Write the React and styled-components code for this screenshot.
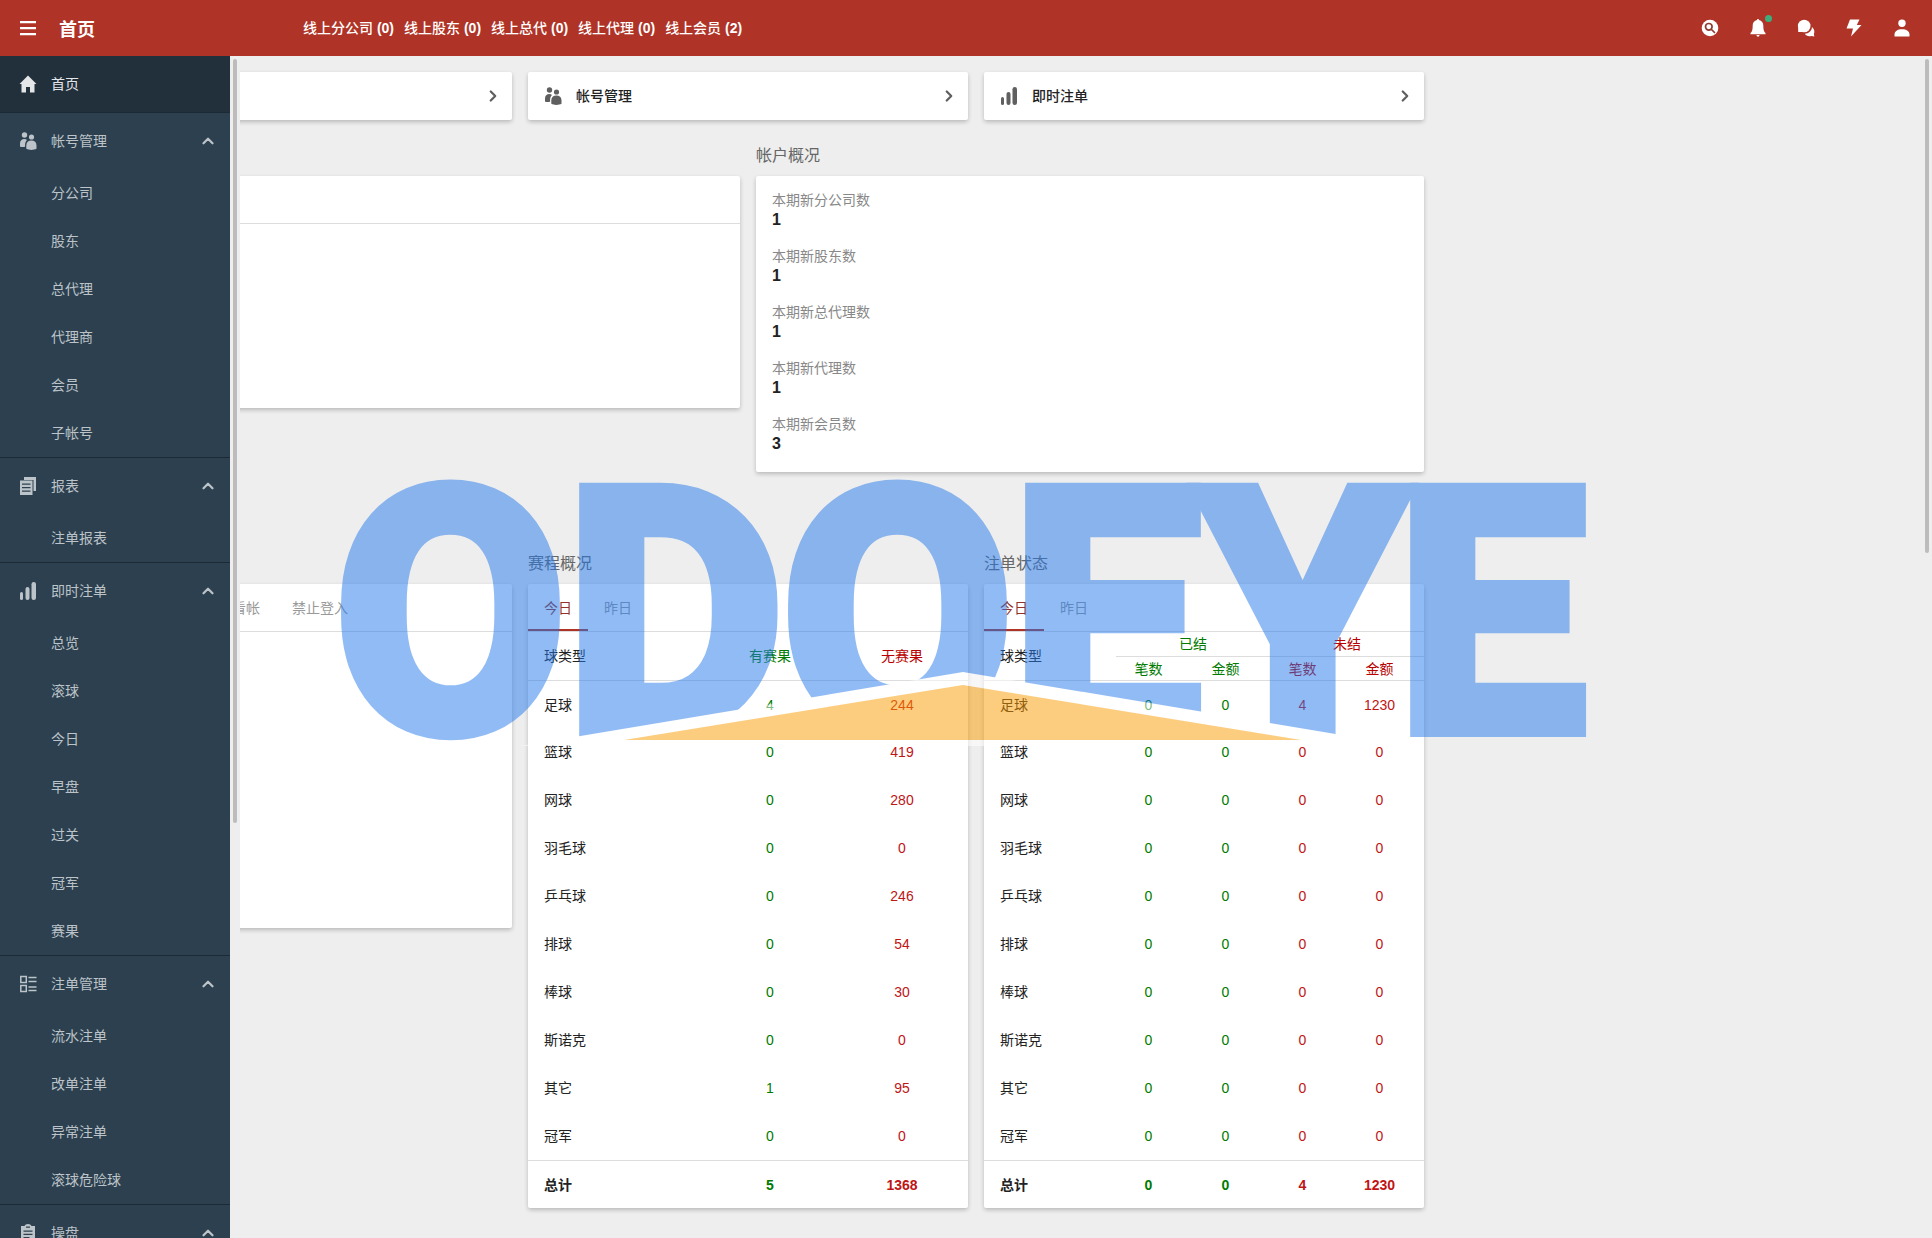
import React from "react";
import styled, { createGlobalStyle } from "styled-components";
import { FiChevronRight, FiChevronUp } from "react-icons/fi";

const ROWS = ["足球", "篮球", "网球", "羽毛球", "乒乓球", "排球", "棒球", "斯诺克", "其它", "冠军"];

const MATCHES = [
	[4, 244],
	[0, 419],
	[0, 280],
	[0, 0],
	[0, 246],
	[0, 54],
	[0, 30],
	[0, 0],
	[1, 95],
	[0, 0],
];

const BETS = ROWS.map((name, i) => (i === 0 ? [0, 0, 4, 1230] : [0, 0, 0, 0]));

const ONLINE = [
	["线上分公司", 0],
	["线上股东", 0],
	["线上总代", 0],
	["线上代理", 0],
	["线上会员", 2],
];

const STATS = [
	["本期新分公司数", 1],
	["本期新股东数", 1],
	["本期新总代理数", 1],
	["本期新代理数", 1],
	["本期新会员数", 3],
];

const MENU = [
	{ title: "帐号管理", icon: "people", items: ["分公司", "股东", "总代理", "代理商", "会员", "子帐号"] },
	{ title: "报表", icon: "report", items: ["注单报表"] },
	{ title: "即时注单", icon: "bars", items: ["总览", "滚球", "今日", "早盘", "过关", "冠军", "赛果"] },
	{ title: "注单管理", icon: "list", items: ["流水注单", "改单注单", "异常注单", "滚球危险球"] },
	{ title: "操盘", icon: "clipboard", items: [] },
];

const shapes = {
	menu: <path d="M1 2h16v2.200H1zM1 8h16v2.200H1zM1 14h16v2.200H1z" />,
	home: <path d="M9 .5.500 9H2.500v8.500H7V12h4v5.500h4.500V9h2z" />,
	people: (
		<>
			<circle cx="5.500" cy="3" r="2.700" />
			<circle cx="12.500" cy="5" r="2.600" />
			<path d="M1 14.500V11.500C1 8.500 2.800 7 5.300 7c1.200 0 2 .3 2.700.9-1.300 1.300-1.900 3-1.900 5v1.800C4 15.200 2 15.200 1 14.500z" />
			<path d="M7.300 16.800V13.500c0-3.200 2-5 5.100-5s5.100 1.800 5.100 5v3.300c-2.500 1.500-7.700 1.500-10.200 0z" />
		</>
	),
	report: (
		<>
			<path d="M5 0h12v14h-2.500V3H5z" />
			<path d="M1 3.500h12.500V18H1zM3 6.500v1.300h8.500V6.500zM3 10v1.300h8.500V10zM3 13.500v1.300h8.500v-1.300z" fillRule="evenodd" />
		</>
	),
	bars: (
		<>
			<rect x="1" y="10" width="3" height="8" rx="1.500" />
			<rect x="6.500" y="5" width="4" height="13" rx="2" />
			<rect x="12.500" y="0" width="4.500" height="18" rx="2.200" />
		</>
	),
	list: (
		<path
			d="M1.800 1.500h5.500v6H1.800zM1.800 10.500h5.500v6H1.800zM9.500 2.500h8M9.500 6.500h8M9.500 12h8M9.500 15.500h8"
			fill="none"
			stroke="currentColor"
			strokeWidth="1.500"
		/>
	),
	clipboard: (
		<path
			fillRule="evenodd"
			d="M2 2h3.500C6 .8 7.300 0 9 0s3 .8 3.500 2H16v16H2zM7 2.500v1.300h4V2.500zM4.500 6.500v1.300h9V6.500zM4.500 9.800v1.300h9V9.800zM4.500 13v1.300h6V13z"
		/>
	),
	search: (
		<>
			<circle cx="9" cy="9" r="8.300" />
			<g fill="none" stroke="#8f3a31" strokeWidth="1.700" strokeLinecap="round">
				<circle cx="7.800" cy="7.800" r="3.300" />
				<path d="m10.500 10.500 3 3" />
			</g>
		</>
	),
	bell: <path d="M8 1c0-1.300 2-1.300 2 0 2.800.5 4.300 2.800 4.300 5.500 0 4.500.7 6.500 2.200 7.500v1.200h-15V14c1.500-1 2.200-3 2.200-7.500C3.700 3.800 5.200 1.500 8 1zM7.500 16h3c0 2.200-3 2.200-3 0z" />,
	chat: (
		<>
			<circle cx="7.200" cy="7" r="6.300" />
			<path d="M1.200 8v5H7z" />
			<path d="M15 8c2.500 2 2.900 4.900 1.900 6.800l.4 2.700-2.900-.5c-2.900 1-5.400-.2-6.600-2.200 4-.2 6.900-2.900 7.200-6.800z" />
		</>
	),
	bolt: <path d="M5 .5h9.500L11.800 6h4.700L6 17.500l2-8H1.500z" />,
	user: (
		<>
			<circle cx="9" cy="4.300" r="3.700" />
			<path d="M1.500 17.500v-2c0-3.300 3-5.300 7.500-5.300s7.500 2 7.500 5.300v2z" />
		</>
	),
};

const Icon = ({ name }) => (
	<IconSvg viewBox="0 0 18 18" aria-hidden="true">
		{shapes[name]}
	</IconSvg>
);

function Header() {
	return (
		<TopBar>
			<Brand>
				<IconButton aria-label="菜单">
					<Icon name="menu" />
				</IconButton>
				<h1>首页</h1>
			</Brand>
			<Online>
				{ONLINE.map(([label, count]) => (
					<a key={label} href="#">
						{label} <b>({count})</b>
					</a>
				))}
			</Online>
			<Tools>
				{["search", "bell", "chat", "bolt", "user"].map((name) => (
					<IconButton key={name} aria-label={name}>
						<Icon name={name} />
						{name === "bell" && <Dot />}
					</IconButton>
				))}
			</Tools>
		</TopBar>
	);
}

function Sidebar() {
	return (
		<Side>
			<HomeLink href="#">
				<Icon name="home" />
				首页
			</HomeLink>
			{MENU.map((group) => (
				<Group key={group.title}>
					<GroupButton aria-expanded="true">
						<Icon name={group.icon} />
						<span>{group.title}</span>
						<FiChevronUp size={18} strokeWidth={3} />
					</GroupButton>
					{group.items.map((item) => (
						<SubLink key={item} href="#">
							{item}
						</SubLink>
					))}
				</Group>
			))}
		</Side>
	);
}

const Shortcut = ({ icon, label }) => (
	<ShortcutLink href="#" aria-label={label || "首页"}>
		{icon && <Icon name={icon} />}
		<span>{label}</span>
		<FiChevronRight size={18} strokeWidth={3} />
	</ShortcutLink>
);

const DayTabs = () => (
	<Tabs>
		<Tab $active>今日</Tab>
		<Tab>昨日</Tab>
	</Tabs>
);

function MatchTable() {
	return (
		<Table>
			<colgroup>
				<Col $w={40} />
				<Col $w={30} />
				<Col $w={30} />
			</colgroup>
			<thead>
				<tr>
					<Name>球类型</Name>
					<Head $tone="green">有赛果</Head>
					<Head $tone="red">无赛果</Head>
				</tr>
			</thead>
			<tbody>
				{ROWS.map((name, i) => (
					<tr key={name}>
						<Name>{name}</Name>
						<Cell $tone="green">{MATCHES[i][0]}</Cell>
						<Cell $tone="red">{MATCHES[i][1]}</Cell>
					</tr>
				))}
			</tbody>
			<tfoot>
				<tr>
					<Name>总计</Name>
					<Cell $tone="green">5</Cell>
					<Cell $tone="red">1368</Cell>
				</tr>
			</tfoot>
		</Table>
	);
}

const tone = (i) => (i < 2 ? "green" : "red");

function BetTable() {
	return (
		<Table>
			<colgroup>
				<Col $w={30} />
				<Col />
				<Col />
				<Col />
				<Col />
			</colgroup>
			<thead>
				<tr>
					<Name rowSpan={2}>球类型</Name>
					<Head $half $tone="green" colSpan={2}>
						已结
					</Head>
					<Head $half $tone="red" colSpan={2}>
						未结
					</Head>
				</tr>
				<tr>
					{["笔数", "金额", "笔数", "金额"].map((label, i) => (
						<Head key={i} $half $line $shift $tone={tone(i)}>
							{label}
						</Head>
					))}
				</tr>
			</thead>
			<tbody>
				{ROWS.map((name, i) => (
					<tr key={name}>
						<Name>{name}</Name>
						{BETS[i].map((value, j) => (
							<Cell key={j} $shift $tone={tone(j)}>
								{value}
							</Cell>
						))}
					</tr>
				))}
			</tbody>
			<tfoot>
				<tr>
					<Name>总计</Name>
					{[0, 0, 4, 1230].map((value, j) => (
						<Cell key={j} $shift $tone={tone(j)}>
							{value}
						</Cell>
					))}
				</tr>
			</tfoot>
		</Table>
	);
}

const Watermark = () => (
	<Mark viewBox="0 0 1240 280" aria-hidden="true">
		<text x="-9 222 438 668 855 1053" y="257">
			ODOEYE
		</text>
		<path d="M176 274 619 200 1064 274z" fill="#fff" />
		<path d="M280 268 619 213 957 268z" fill="#fb9b00" />
	</Mark>
);

export default function App() {
	return (
		<Shell>
			<GlobalStyle />
			<Header />
			<Body>
				<Sidebar />
				<Gutter>
					<Thumb $size={65} />
				</Gutter>
				<Main>
					<Content>
						<Columns>
							<Shortcut />
							<Shortcut icon="people" label="帐号管理" />
							<Shortcut icon="bars" label="即时注单" />
						</Columns>
						<Halves>
							<section>
								<Title />
								<Card>
									<Tabs />
									<Blank $h={184} />
								</Card>
							</section>
							<section>
								<Title>帐户概况</Title>
								<Card>
									<Stats>
										{STATS.map(([label, value]) => (
											<div key={label}>
												<dt>{label}</dt>
												<dd>{value}</dd>
											</div>
										))}
									</Stats>
								</Card>
							</section>
						</Halves>
						<Columns $spaced>
							<section>
								<Title />
								<Card>
									<Tabs $scrolled>
										<Tab>看帐</Tab>
										<Tab>禁止登入</Tab>
									</Tabs>
									<Blank $h={296} />
								</Card>
							</section>
							<section>
								<Title>赛程概况</Title>
								<Card>
									<DayTabs />
									<MatchTable />
								</Card>
							</section>
							<section>
								<Title>注单状态</Title>
								<Card>
									<DayTabs />
									<BetTable />
								</Card>
							</section>
						</Columns>
					</Content>
				</Main>
				<Gutter>
					<Thumb $size={42} />
				</Gutter>
			</Body>
			<Watermark />
		</Shell>
	);
}

const GlobalStyle = createGlobalStyle`
	* {
		box-sizing: border-box;
	}
	body {
		margin: 0;
		background: #eee;
		color: #222;
		font: 14px/20px "Liberation Sans", "Noto Sans CJK SC", sans-serif;
	}
	a {
		color: inherit;
		text-decoration: none;
	}
	button {
		border: 0;
		padding: 0;
		background: none;
		color: inherit;
		font: inherit;
		cursor: pointer;
	}
`;

const Shell = styled.div`
	display: flex;
	flex-direction: column;
	height: 100vh;
	overflow: hidden;
`;

const IconSvg = styled.svg`
	width: 18px;
	height: 18px;
	flex: none;
	fill: currentColor;
`;

const TopBar = styled.header`
	display: flex;
	align-items: center;
	flex: none;
	height: 56px;
	padding: 0 21px 0 19px;
	background: #af3427;
	color: #fff;
`;

const Brand = styled.div`
	display: flex;
	align-items: center;
	gap: 22px;
	width: 284px;

	h1 {
		margin: 0;
		padding-top: 4px;
		font-size: 18px;
		line-height: 24px;
	}
`;

const IconButton = styled.button`
	display: flex;
	position: relative;
`;

const Online = styled.nav`
	display: flex;
	flex: 1;
	gap: 10px;
	font-weight: 500;
`;

const Tools = styled.div`
	display: flex;
	gap: 30px;
`;

const Dot = styled.i`
	position: absolute;
	top: -4px;
	right: -5px;
	width: 7px;
	height: 7px;
	border-radius: 50%;
	background: #3cae7c;
`;

const Body = styled.div`
	display: flex;
	flex: 1;
	min-height: 0;
`;

const Side = styled.nav`
	flex: none;
	width: 230px;
	overflow: hidden;
	background: #2c404f;
	color: #bcc3c9;
`;

const HomeLink = styled.a`
	display: flex;
	align-items: center;
	gap: 14px;
	height: 56px;
	padding: 0 19px;
	background: #22303c;
	color: #e4e6e8;
`;

const Group = styled.div`
	border-top: 1px solid #1c2a36;
`;

const GroupButton = styled.button`
	display: flex;
	align-items: center;
	gap: 14px;
	width: 100%;
	height: 56px;
	padding: 0 13px 0 19px;
	text-align: left;

	span {
		flex: 1;
	}
`;

const SubLink = styled.a`
	display: block;
	padding-left: 51px;
	line-height: 48px;
`;

const Gutter = styled.div`
	flex: none;
	width: 10px;
	padding: 3px;
`;

const Thumb = styled.div`
	width: 4px;
	height: ${(props) => props.$size + "%"};
	border-radius: 2px;
	background: #bdbbbb;
`;

const Main = styled.main`
	flex: 1;
	min-width: 0;
	overflow: hidden;
`;

/* the first column is scrolled out under the sidebar */
const Content = styled.div`
	max-width: 1352px;
	margin-left: -168px;
	padding-top: 16px;
`;

const Columns = styled.div`
	display: grid;
	grid-template-columns: repeat(3, 1fr);
	align-items: start;
	gap: 16px;
	padding-top: ${(props) => (props.$spaced ? "72px" : "0")};
`;

const Halves = styled.div`
	display: grid;
	grid-template-columns: 1fr 1fr;
	align-items: start;
	gap: 16px;
	padding-top: 16px;
`;

const Card = styled.div`
	border-radius: 2px;
	background: #fff;
	box-shadow: 0 2px 4px rgba(0, 0, 0, 0.22);
`;

const ShortcutLink = styled.a`
	display: flex;
	align-items: center;
	gap: 14px;
	height: 48px;
	padding: 0 10px 0 16px;
	border-radius: 2px;
	background: #fff;
	box-shadow: 0 2px 4px rgba(0, 0, 0, 0.22);
	font-weight: 500;

	span {
		flex: 1;
	}
	svg {
		color: #5f5f5f;
	}
`;

const Title = styled.h2`
	height: 40px;
	margin: 0;
	font-size: 16px;
	font-weight: 400;
	line-height: 40px;
	color: #666;
`;

const Tabs = styled.div`
	display: flex;
	height: 48px;
	padding-left: ${(props) => (props.$scrolled ? "144px" : "0")};
	border-bottom: 1px solid #ddd;
`;

const Tab = styled.button`
	padding: 0 16px;
	border-top: 2px solid transparent;
	border-bottom: 2px solid ${(props) => (props.$active ? "#af3427" : "transparent")};
	color: ${(props) => (props.$active ? "#93322a" : "#999")};
`;

const Blank = styled.div`
	height: ${(props) => props.$h + "px"};
`;

const Stats = styled.dl`
	margin: 0;
	padding: 16px 16px 0;

	div {
		height: 56px;
	}
	dt {
		line-height: 16px;
		color: #888;
	}
	dd {
		margin: 0;
		font-size: 16px;
		font-weight: 700;
		line-height: 24px;
	}
`;

const Table = styled.table`
	width: 100%;
	table-layout: fixed;
	border-spacing: 0;
	font-size: 14px;
	line-height: 20px;

	tbody tr:first-child > *,
	tfoot tr > * {
		border-top: 1px solid #ddd;
	}
	tfoot tr > * {
		font-weight: 700;
	}
`;

const Col = styled.col`
	width: ${(props) => (props.$w ? props.$w + "%" : "auto")};
`;

const Name = styled.th`
	height: 48px;
	padding: 0 0 0 16px;
	font-weight: 400;
	text-align: left;
`;

const Cell = styled.td`
	height: 48px;
	padding: 0 ${(props) => (props.$shift ? "12px" : "0")} 0 0;
	color: ${(props) => (props.$tone === "green" ? "#007a00" : "#c01515")};
	text-align: center;
`;

const Head = styled.th`
	height: ${(props) => (props.$half ? "24px" : "48px")};
	padding: 0 ${(props) => (props.$shift ? "12px" : "0")} 0 0;
	border-top: ${(props) => (props.$line ? "1px solid #ddd" : "0")};
	color: ${(props) => (props.$tone === "green" ? "#007a00" : "#b80000")};
	font-weight: 400;
`;

const Mark = styled.svg`
	position: fixed;
	top: 472px;
	left: 344px;
	width: 1240px;
	height: 280px;
	opacity: 0.5;
	overflow: visible;
	pointer-events: none;

	text {
		fill: #2579ea;
		stroke: #2579ea;
		stroke-width: 16px;
		font-family: Roboto, sans-serif;
		font-size: 335px;
		font-weight: 700;
	}
`;
